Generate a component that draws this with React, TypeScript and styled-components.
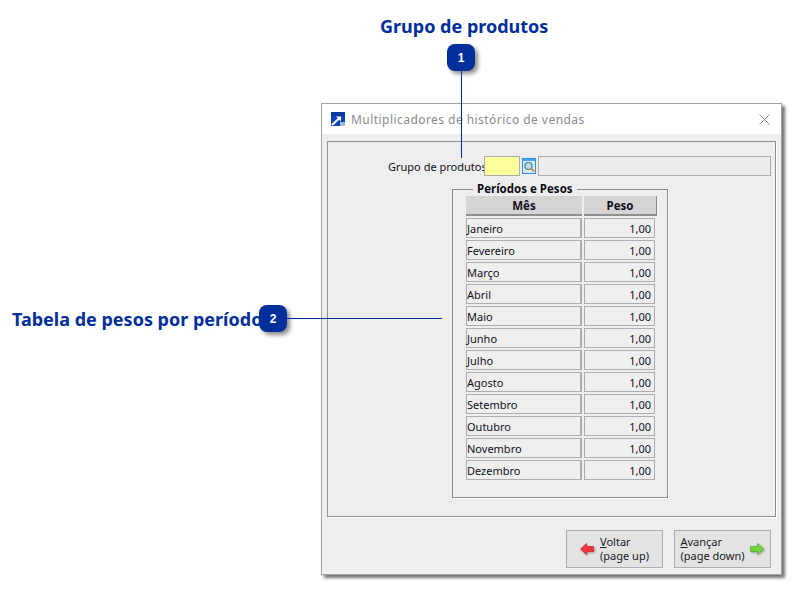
import React from "react";
import styled, { createGlobalStyle } from "styled-components";

const Global = createGlobalStyle`
  html, body { margin: 0; padding: 0; background: #fff; }
  body { font-family: "DejaVu Sans", "Liberation Sans", sans-serif; }
`;

const Page = styled.div`
  position: relative;
  width: 805px;
  height: 591px;
  overflow: hidden;
  padding: 103px 0 0 321px;
  box-sizing: border-box;
  background: #fff;
`;

const Callout = styled.div<{ $x: number; $y: number }>`
  position: absolute;
  left: ${(p) => p.$x}px;
  top: ${(p) => p.$y}px;
  z-index: 3;
`;

const CalloutTitle = styled.div`
  font-family: "Noto Sans", "Open Sans", sans-serif;
  font-weight: 700;
  font-size: 18px;
  line-height: 24px;
  color: #002e9b;
  white-space: nowrap;
`;

const Badge = styled.div`
  width: 28px;
  height: 27px;
  border-radius: 8px;
  background: #002e9b;
  color: #fff;
  font-family: "Liberation Sans", sans-serif;
  font-weight: 700;
  font-size: 12px;
  display: flex;
  align-items: center;
  justify-content: center;
  box-shadow: 3px 3px 4px rgba(0, 0, 0, 0.45);
`;

const Leader = styled.div<{ $w: number; $h: number }>`
  position: absolute;
  width: ${(p) => p.$w}px;
  height: ${(p) => p.$h}px;
  background: #002e9b;
`;

const Window = styled.div`
  position: relative;
  width: 461px;
  height: 472px;
  box-sizing: border-box;
  border: 1px solid #a3a3a3;
  background: #eeeeee;
  box-shadow: 3px 3px 3px rgba(0, 0, 0, 0.55);
  display: flex;
  flex-direction: column;
  font-size: 11px;
  color: #10101a;
  font-family: "Noto Sans", sans-serif;
`;

const TitleBar = styled.div`
  height: 30px;
  background: #fff;
  display: flex;
  align-items: center;
  padding: 0 8px 0 9px;
  flex: none;
`;

const TitleText = styled.span`
  margin-left: 6px;
  font-size: 12px;
  letter-spacing: 0.45px;
  color: #8c8c8c;
  flex: 1;
`;

const Panel = styled.div`
  margin: 7px 5px 0 5px;
  height: 376px;
  box-sizing: border-box;
  border: 1px solid #8f8f8f;
  box-shadow: 1px 1px 0 #fff;
  padding: 14px 4px 0 0;
  display: flex;
  flex-direction: column;
`;

const FieldRow = styled.div`
  display: flex;
  align-items: center;
  height: 20px;
  padding-left: 60px;
`;

const FieldLabel = styled.span`
  width: 96px;
  white-space: nowrap;
`;

const Input = styled.div<{ $yellow?: boolean }>`
  height: 20px;
  box-sizing: border-box;
  border: 1px solid #ababab;
  background: ${(p) => (p.$yellow ? "#ffff9b" : "#ededed")};
  width: ${(p) => (p.$yellow ? "36px" : "auto")};
  flex: ${(p) => (p.$yellow ? "none" : "1")};
`;

const LookupButton = styled.div`
  margin: 0 2px;
  width: 14px;
  height: 16px;
  flex: none;
  line-height: 0;
`;

const Group = styled.fieldset`
  margin: 6px 0 0 124px;
  padding: 0 0 0 13px;
  width: 216px;
  height: 316px;
  box-sizing: border-box;
  border: 1px solid #8a8a8a;
  box-shadow: 1px 1px 0 #fff;
  min-width: 0;
`;

const Legend = styled.legend`
  margin-left: 7px;
  padding: 0 4px;
  font-weight: 700;
  font-size: 11.5px;
  line-height: 14px;
  color: #0b0b14;
`;

const Table = styled.div`
  display: grid;
  grid-template-columns: 116px 2px 73px;
  grid-auto-rows: 20px;
  row-gap: 2px;
  margin-top: 0;
`;

const HeadCell = styled.div<{ $col: number }>`
  grid-column: ${(p) => p.$col};
  background: #d4d4d4;
  border-bottom: 2px solid #8f8f8f;
  box-sizing: border-box;
  font-weight: 700;
  font-size: 11.5px;
  display: flex;
  align-items: center;
  justify-content: center;
`;

const HeadEnd = styled(HeadCell)`
  border-right: 1px solid #8f8f8f;
`;

const Cell = styled.div<{ $col: number; $right?: boolean }>`
  grid-column: ${(p) => p.$col};
  width: ${(p) => (p.$right ? "71px" : "116px")};
  box-sizing: border-box;
  border: 1px solid #adadb3;
  ${(p) => (p.$right ? "border-left-width: 1px;" : "border-right-width: 2px;")}
  background: #efefef;
  display: flex;
  align-items: center;
  justify-content: ${(p) => (p.$right ? "flex-end" : "flex-start")};
  padding: ${(p) => (p.$right ? "0 3px 0 0" : "0")};
  white-space: nowrap;
`;

const Footer = styled.div`
  display: flex;
  justify-content: flex-end;
  gap: 11px;
  padding: 13px 10px 0 0;
`;

const NavButton = styled.div`
  width: 97px;
  height: 38px;
  box-sizing: border-box;
  border: 1px solid #adadad;
  background: #e3e3e3;
  display: flex;
  align-items: center;
  justify-content: center;
  gap: 5px;
  line-height: 14px;
  white-space: nowrap;
  color: #1a1a24;
`;

const Under = styled.span`
  text-decoration: underline;
`;

const Clipped = styled.div`
  position: absolute;
  left: 378px;
  bottom: -4px;
  font-size: 9px;
  line-height: 10px;
  height: 4px;
  overflow: hidden;
  color: #333;
  z-index: -1;
`;

const AppIcon = () => (
  <svg width="14" height="14" viewBox="0 0 14 14" style={{ flex: "none" }}>
    <rect width="14" height="14" fill="#0d47b5" />
    <rect y="0" width="14" height="4" fill="#083a9c" />
    <path d="M1 13 L8 6.5" stroke="#fff" strokeWidth="2" />
    <path d="M5 4.5 H10 V9.5 Z" fill="#fff" />
    <rect x="9" y="10" width="5" height="4" fill="#9fb8e0" />
  </svg>
);

const CloseIcon = () => (
  <svg width="11" height="11" viewBox="0 0 11 11" style={{ flex: "none", marginRight: 3 }}>
    <path d="M0.5 0.5 L10.5 10.5 M10.5 0.5 L0.5 10.5" stroke="#8f8f8f" strokeWidth="1" fill="none" />
  </svg>
);

const LookupIcon = () => (
  <svg width="14" height="16" viewBox="0 0 14 16">
    <rect x="0.5" y="0.5" width="13" height="15" fill="#d8ecfb" stroke="#2a8fe8" />
    <rect x="1" y="1" width="12" height="2" fill="#4aa5ee" />
    <circle cx="6.5" cy="8" r="3.5" fill="#bfe0f2" stroke="#4a7a94" strokeWidth="1.2" />
    <path d="M9 10.5 L12 13.5" stroke="#e08a2e" strokeWidth="2" />
  </svg>
);

const ArrowLeft = () => (
  <svg width="15" height="13" viewBox="0 0 15 13" style={{ flex: "none", filter: "drop-shadow(1px 1px 1px rgba(0,0,0,.35))" }}>
    <path d="M0.5 6 L6.5 0.5 V3.5 H13.5 V8.5 H6.5 V11.5 Z" fill="#f0333f" stroke="#d8202c" strokeWidth="0.7" />
  </svg>
);

const ArrowRight = () => (
  <svg width="15" height="13" viewBox="0 0 15 13" style={{ flex: "none", filter: "drop-shadow(1px 1px 1px rgba(0,0,0,.35))" }}>
    <path d="M13.5 6 L7.5 0.5 V3.5 H0.5 V8.5 H7.5 V11.5 Z" fill="#6fd63a" stroke="#4fb524" strokeWidth="0.7" />
  </svg>
);

const MONTHS = [
  "Janeiro", "Fevereiro", "Março", "Abril", "Maio", "Junho",
  "Julho", "Agosto", "Setembro", "Outubro", "Novembro", "Dezembro",
];

export default function App() {
  return (
    <Page>
      <Global />
      <Callout $x={380} $y={14}>
        <CalloutTitle>Grupo de produtos</CalloutTitle>
      </Callout>
      <Callout $x={447} $y={44}>
        <Badge>1</Badge>
        <Leader $w={1} $h={87} style={{ left: 14, top: 27 }} />
      </Callout>
      <Callout $x={12} $y={307}>
        <CalloutTitle>Tabela de pesos por período</CalloutTitle>
      </Callout>
      <Callout $x={259} $y={305}>
        <Badge>2</Badge>
        <Leader $w={155} $h={1} style={{ left: 28, top: 13 }} />
      </Callout>

      <Window>
        <TitleBar>
          <AppIcon />
          <TitleText>Multiplicadores de histórico de vendas</TitleText>
          <CloseIcon />
        </TitleBar>
        <Panel>
          <FieldRow>
            <FieldLabel>Grupo de produtos</FieldLabel>
            <Input $yellow />
            <LookupButton><LookupIcon /></LookupButton>
            <Input />
          </FieldRow>
          <Group>
            <Legend>Períodos e Pesos</Legend>
            <Table>
              <HeadCell $col={1}>Mês</HeadCell>
              <HeadEnd $col={3}>Peso</HeadEnd>
              {MONTHS.map((m) => (
                <React.Fragment key={m}>
                  <Cell $col={1}>{m}</Cell>
                  <Cell $col={3} $right>1,00</Cell>
                </React.Fragment>
              ))}
            </Table>
          </Group>
        </Panel>
        <Footer>
          <NavButton>
            <ArrowLeft />
            <span><Under>V</Under>oltar<br />(page up)</span>
          </NavButton>
          <NavButton>
            <span><Under>A</Under>vançar<br />(page down)</span>
            <ArrowRight />
          </NavButton>
        </Footer>
      </Window>
    </Page>
  );
}
